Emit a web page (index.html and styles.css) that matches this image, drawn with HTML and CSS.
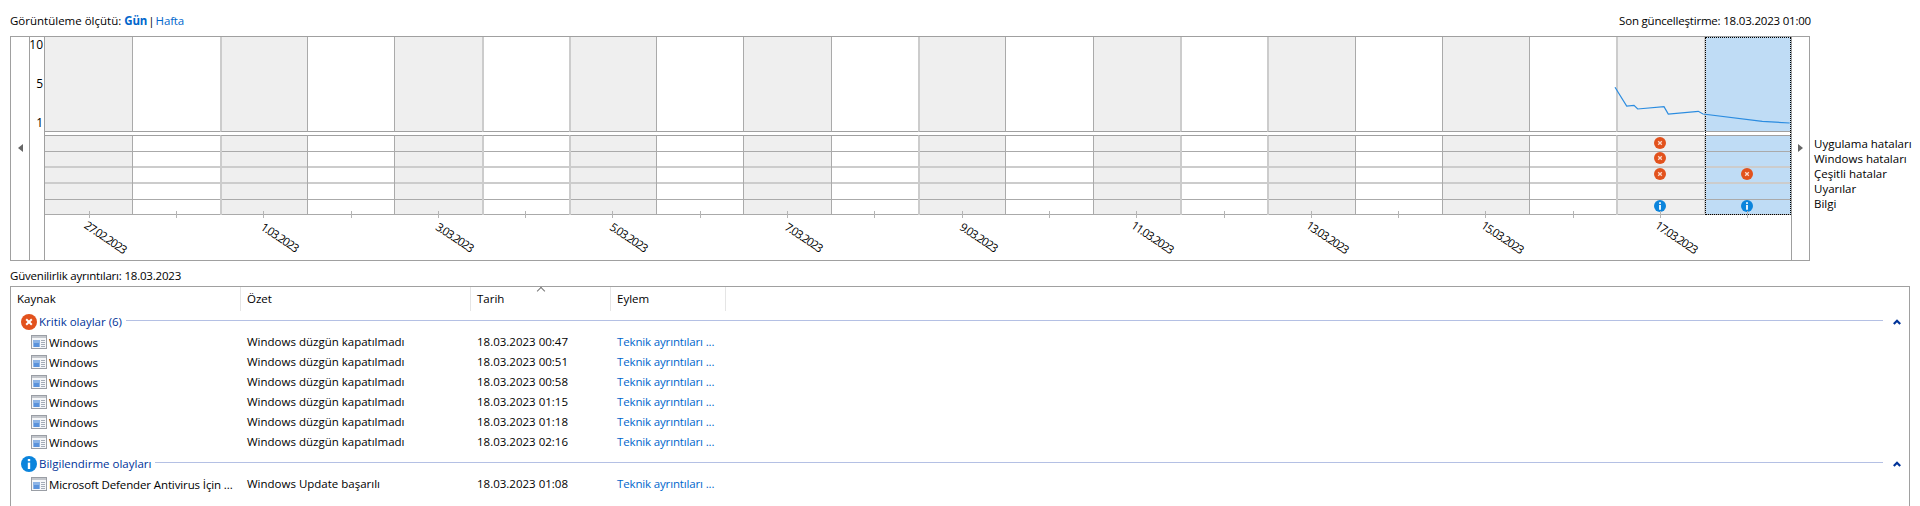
FILE: index.html
```html
<!DOCTYPE html>
<html lang="tr">
<head>
  <meta charset="UTF-8">
  <title>Güvenilirlik İzleyicisi</title>
  <link rel="stylesheet" href="styles.css">
</head>
<body>
  <svg class="defs" width="0" height="0">
    <symbol id="ic-error" viewBox="0 0 16 16">
      <circle cx="8" cy="8" r="8" fill="#e2521d"/>
      <path d="M5.2 5.2l5.6 5.6M10.8 5.2l-5.6 5.6" stroke="#fff" stroke-width="2" fill="none"/>
    </symbol>
    <symbol id="ic-error-small" viewBox="0 0 12 12">
      <circle cx="6" cy="6" r="6" fill="#e2521d"/>
      <path d="M4.2 4.2l3.6 3.6M7.8 4.2l-3.6 3.6" stroke="#fbd9cc" stroke-width="1.3" fill="none"/>
    </symbol>
    <symbol id="ic-info" viewBox="0 0 16 16">
      <circle cx="8" cy="8" r="8" fill="#0b84dc"/>
      <rect x="6.8" y="6.6" width="2.4" height="6.4" fill="#fff"/>
      <rect x="6.8" y="3" width="2.4" height="2.2" fill="#fff"/>
    </symbol>
    <symbol id="ic-window" viewBox="0 0 16 14">
      <rect x="0.5" y="0.5" width="15" height="13" fill="#f6f7f9" stroke="#9a9ea5"/>
      <rect x="1" y="1" width="14" height="2" fill="#c4c7cc"/>
      <rect x="2" y="5" width="7" height="7" fill="#8db4e6"/>
      <rect x="3" y="8" width="5" height="4" fill="#5b93dc"/>
      <path d="M10 5.5h4M10 7.5h4M10 9.5h4M10 11.5h4" stroke="#a4acb8"/>
    </symbol>
    <symbol id="ic-collapse" viewBox="0 0 8 6">
      <path d="M0.8 5L4 1.8 7.2 5" stroke="#003399" stroke-width="2.2" fill="none"/>
    </symbol>
  </svg>

  <div class="toolbar">
    <div>Görüntüleme ölçütü: <a class="link active">Gün</a><span class="sep">|</span><a class="link">Hafta</a></div>
    <div class="updated">Son güncelleştirme: 18.03.2023 01:00</div>
  </div>

  <div class="chart-row">
    <div class="chart">
      <div class="nav nav-left"><span class="arrow-left"></span></div>
      <div class="yaxis"><span>10</span><span>5</span><span>1</span></div>
      <div class="main">
        <div class="cols">
          <div class="col"><div class="plot"></div><div class="events"><i></i><i></i><i></i><i></i><i></i></div></div>
          <div class="col"><div class="plot"></div><div class="events"><i></i><i></i><i></i><i></i><i></i></div></div>
          <div class="col soft"><div class="plot"></div><div class="events"><i></i><i></i><i></i><i></i><i></i></div></div>
          <div class="col"><div class="plot"></div><div class="events"><i></i><i></i><i></i><i></i><i></i></div></div>
          <div class="col"><div class="plot"></div><div class="events"><i></i><i></i><i></i><i></i><i></i></div></div>
          <div class="col soft"><div class="plot"></div><div class="events"><i></i><i></i><i></i><i></i><i></i></div></div>
          <div class="col soft"><div class="plot"></div><div class="events"><i></i><i></i><i></i><i></i><i></i></div></div>
          <div class="col"><div class="plot"></div><div class="events"><i></i><i></i><i></i><i></i><i></i></div></div>
          <div class="col"><div class="plot"></div><div class="events"><i></i><i></i><i></i><i></i><i></i></div></div>
          <div class="col"><div class="plot"></div><div class="events"><i></i><i></i><i></i><i></i><i></i></div></div>
          <div class="col soft"><div class="plot"></div><div class="events"><i></i><i></i><i></i><i></i><i></i></div></div>
          <div class="col"><div class="plot"></div><div class="events"><i></i><i></i><i></i><i></i><i></i></div></div>
          <div class="col"><div class="plot"></div><div class="events"><i></i><i></i><i></i><i></i><i></i></div></div>
          <div class="col soft"><div class="plot"></div><div class="events"><i></i><i></i><i></i><i></i><i></i></div></div>
          <div class="col soft"><div class="plot"></div><div class="events"><i></i><i></i><i></i><i></i><i></i></div></div>
          <div class="col"><div class="plot"></div><div class="events"><i></i><i></i><i></i><i></i><i></i></div></div>
          <div class="col"><div class="plot"></div><div class="events"><i></i><i></i><i></i><i></i><i></i></div></div>
          <div class="col"><div class="plot"></div><div class="events"><i></i><i></i><i></i><i></i><i></i></div></div>
          <div class="col soft line-host">
            <div class="plot"></div>
            <div class="events">
              <i><svg class="ev-icon"><use href="#ic-error-small"/></svg></i>
              <i><svg class="ev-icon"><use href="#ic-error-small"/></svg></i>
              <i><svg class="ev-icon"><use href="#ic-error-small"/></svg></i>
              <i></i>
              <i><svg class="ev-icon"><use href="#ic-info"/></svg></i>
            </div>
            <svg class="trend" width="176" height="95">
              <polyline points="-1,50.3 10.7,69 18,68.3 21.7,72 48,69.7 52.3,77 82.3,74.3 87,77 146.3,84.3 173.7,86" fill="none" stroke="#2b8ce0" stroke-width="1.2"/>
            </svg>
          </div>
          <div class="col soft selected">
            <div class="plot"></div>
            <div class="events">
              <i></i>
              <i></i>
              <i><svg class="ev-icon"><use href="#ic-error-small"/></svg></i>
              <i></i>
              <i><svg class="ev-icon"><use href="#ic-info"/></svg></i>
            </div>
          </div>
        </div>
        <div class="dates">
          <div class="tick"><span>27.02.2023</span></div>
          <div class="tick"></div>
          <div class="tick"><span>1.03.2023</span></div>
          <div class="tick"></div>
          <div class="tick"><span>3.03.2023</span></div>
          <div class="tick"></div>
          <div class="tick"><span>5.03.2023</span></div>
          <div class="tick"></div>
          <div class="tick"><span>7.03.2023</span></div>
          <div class="tick"></div>
          <div class="tick"><span>9.03.2023</span></div>
          <div class="tick"></div>
          <div class="tick"><span>11.03.2023</span></div>
          <div class="tick"></div>
          <div class="tick"><span>13.03.2023</span></div>
          <div class="tick"></div>
          <div class="tick"><span>15.03.2023</span></div>
          <div class="tick"></div>
          <div class="tick"><span>17.03.2023</span></div>
          <div class="tick"></div>
        </div>
      </div>
      <div class="nav nav-right"><span class="arrow-right"></span></div>
    </div>
    <div class="legend">
      <div>Uygulama hataları</div>
      <div>Windows hataları</div>
      <div>Çeşitli hatalar</div>
      <div>Uyarılar</div>
      <div>Bilgi</div>
    </div>
  </div>

  <div class="details-title">Güvenilirlik ayrıntıları: 18.03.2023</div>

  <div class="details">
    <div class="table-head">
      <div>Kaynak</div>
      <div>Özet</div>
      <div class="sorted">Tarih</div>
      <div>Eylem</div>
    </div>

    <div class="group">
      <svg class="group-icon"><use href="#ic-error"/></svg>
      <span>Kritik olaylar (6)</span>
      <div class="group-line"></div>
      <svg class="collapse"><use href="#ic-collapse"/></svg>
    </div>
    <div class="row">
      <div class="source"><svg class="row-icon"><use href="#ic-window"/></svg>Windows</div>
      <div>Windows düzgün kapatılmadı</div>
      <div>18.03.2023 00:47</div>
      <div><a class="link">Teknik ayrıntıları ...</a></div>
    </div>
    <div class="row">
      <div class="source"><svg class="row-icon"><use href="#ic-window"/></svg>Windows</div>
      <div>Windows düzgün kapatılmadı</div>
      <div>18.03.2023 00:51</div>
      <div><a class="link">Teknik ayrıntıları ...</a></div>
    </div>
    <div class="row">
      <div class="source"><svg class="row-icon"><use href="#ic-window"/></svg>Windows</div>
      <div>Windows düzgün kapatılmadı</div>
      <div>18.03.2023 00:58</div>
      <div><a class="link">Teknik ayrıntıları ...</a></div>
    </div>
    <div class="row">
      <div class="source"><svg class="row-icon"><use href="#ic-window"/></svg>Windows</div>
      <div>Windows düzgün kapatılmadı</div>
      <div>18.03.2023 01:15</div>
      <div><a class="link">Teknik ayrıntıları ...</a></div>
    </div>
    <div class="row">
      <div class="source"><svg class="row-icon"><use href="#ic-window"/></svg>Windows</div>
      <div>Windows düzgün kapatılmadı</div>
      <div>18.03.2023 01:18</div>
      <div><a class="link">Teknik ayrıntıları ...</a></div>
    </div>
    <div class="row">
      <div class="source"><svg class="row-icon"><use href="#ic-window"/></svg>Windows</div>
      <div>Windows düzgün kapatılmadı</div>
      <div>18.03.2023 02:16</div>
      <div><a class="link">Teknik ayrıntıları ...</a></div>
    </div>

    <div class="group group-next">
      <svg class="group-icon"><use href="#ic-info"/></svg>
      <span>Bilgilendirme olayları</span>
      <div class="group-line"></div>
      <svg class="collapse"><use href="#ic-collapse"/></svg>
    </div>
    <div class="row">
      <div class="source source-long"><svg class="row-icon"><use href="#ic-window"/></svg>Microsoft Defender Antivirus İçin ...</div>
      <div>Windows Update başarılı</div>
      <div>18.03.2023 01:08</div>
      <div><a class="link">Teknik ayrıntıları ...</a></div>
    </div>
  </div>
</body>
</html>
```

FILE: styles.css
```css
* {
  box-sizing: border-box;
  margin: 0;
  padding: 0;
}

html,
body {
  height: 506px;
  overflow: hidden;
}

body {
  font-family: 'Open Sans', 'Noto Sans', Arial, sans-serif;
  font-size: 11.5px;
  line-height: 16px;
  color: #000;
  background: #fff;
  padding: 13px 10px 0 10px;
}

.defs {
  position: absolute;
}

.link {
  color: #0066cc;
  letter-spacing: -0.15px;
}

.link.active {
  font-weight: bold;
}

/* Top line */
.toolbar {
  display: flex;
  justify-content: space-between;
  width: 1801px;
  margin-bottom: 7px;
}

.sep {
  margin: 0 1px;
}

.updated {
  letter-spacing: -0.2px;
}

/* Chart */
.chart-row {
  display: flex;
  margin-bottom: 7px;
}

.chart {
  display: flex;
  flex: none;
  width: 1800px;
  height: 225px;
  border: 1px solid #a0a0a0;
}

.nav {
  display: flex;
  align-items: center;
  justify-content: center;
  padding-bottom: 2px;
}

.nav-left {
  width: 19px;
  border-right: 1px solid #a0a0a0;
}

.nav-right {
  width: 18px;
  border-left: 1px solid #a0a0a0;
}

.arrow-left {
  border: 4px solid transparent;
  border-left: 0;
  border-right: 5px solid #666;
}

.arrow-right {
  border: 4px solid transparent;
  border-right: 0;
  border-left: 5px solid #666;
}

.yaxis {
  width: 15px;
  border-right: 1px solid #a0a0a0;
  display: flex;
  flex-direction: column;
  align-items: flex-end;
  gap: 23px;
  padding-right: 1px;
  font-size: 12px;
}

.main {
  flex: 1;
  min-width: 0;
}

.cols {
  display: grid;
  grid-template-columns: repeat(20, 1fr);
  height: 178px;
}

.col {
  position: relative;
  min-width: 0;
}

.plot {
  height: 95px;
  margin-bottom: 3px;
  border-bottom: 1px solid #a0a0a0;
  border-left: 1px solid #aaa;
}

.events {
  height: 80px;
  border-top: 1px solid #a0a0a0;
  border-left: 1px solid #aaa;
  display: grid;
  grid-template-rows: 16px 16px 16px 16px 15px;
}

.col:first-child .plot,
.col:first-child .events {
  border-left: 0;
}

.col.soft .plot,
.col.soft .events {
  border-left: 2px solid #ccc;
}

.col:nth-child(odd) .plot,
.col:nth-child(odd) .events {
  background: #efefef;
}

.events i {
  display: flex;
  align-items: center;
  justify-content: center;
  border-bottom: 1px solid #aaa;
  overflow: visible;
}

.events i:nth-child(2),
.events i:nth-child(3) {
  border-bottom: 2px solid #ccc;
}

.ev-icon {
  width: 12px;
  height: 12px;
  flex: none;
  margin: 0 2px 2px 0;
}

.trend {
  position: absolute;
  top: 0;
  left: 0;
  z-index: 1;
  overflow: visible;
}

.col.selected .plot,
.col.selected .events {
  background: #bfdcf5;
}

.col.selected::after {
  content: "";
  position: absolute;
  top: 0;
  left: 1px;
  right: 0;
  bottom: 0;
  border: 1px dotted #000;
}

.dates {
  display: grid;
  grid-template-columns: repeat(20, 1fr);
  height: 45px;
}

.tick {
  position: relative;
  display: flex;
  justify-content: center;
  min-width: 0;
}

.tick::before {
  content: "";
  position: absolute;
  top: -4px;
  left: 50%;
  width: 1px;
  height: 7px;
  background: #b4b4b4;
}

.tick span {
  display: block;
  flex: none;
  margin-top: 13px;
  font-size: 11.5px;
  letter-spacing: -1.1px;
  white-space: nowrap;
  transform: translateX(12px) rotate(34deg);
}

/* Legend */
.legend {
  padding: 100px 0 0 4px;
  line-height: 15px;
  white-space: nowrap;
}

/* Details table */
.details-title {
  margin-bottom: 2px;
  letter-spacing: -0.2px;
}

.details {
  width: 1900px;
  height: 240px;
  border: 1px solid #a0a0a0;
  border-bottom: 0;
}

.table-head,
.row {
  display: grid;
  grid-template-columns: 230px 230px 140px 115px;
}

.table-head {
  height: 24px;
  line-height: 24px;
}

.table-head > div {
  padding-left: 6px;
  border-right: 1px solid #e5e5e5;
}

.sorted {
  position: relative;
}

.sorted::before {
  content: "";
  position: absolute;
  top: 1px;
  left: 67px;
  width: 5px;
  height: 5px;
  border-top: 1px solid #777;
  border-left: 1px solid #777;
  transform: rotate(45deg);
}

.group {
  display: flex;
  align-items: center;
  height: 21px;
  padding-left: 10px;
  color: #003399;
}

.group-next {
  margin-top: 1px;
}

.group-icon {
  width: 16px;
  height: 16px;
  margin-right: 2px;
  flex: none;
}

.group-line {
  flex: 1;
  height: 1px;
  margin: 0 5px 2px 4px;
  background: #b4c0e4;
}

.collapse {
  width: 8px;
  height: 6px;
  margin: 0 8px 0 5px;
  flex: none;
}

.row {
  height: 20px;
  line-height: 19px;
}

.row > div {
  padding-left: 6px;
  white-space: nowrap;
}

.row > .source {
  display: flex;
  align-items: center;
  padding-left: 20px;
}

.row > .source-long {
  letter-spacing: -0.12px;
}

.row-icon {
  width: 16px;
  height: 14px;
  margin-right: 2px;
  flex: none;
}
```
